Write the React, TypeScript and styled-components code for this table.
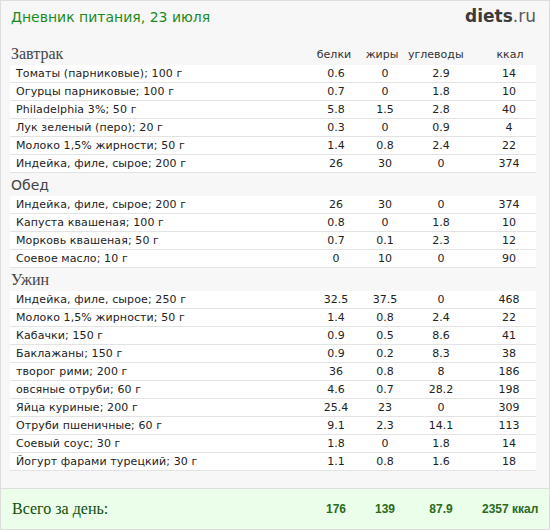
import React from "react";
import styled, { createGlobalStyle } from "styled-components";

const Global = createGlobalStyle`
  html, body { margin: 0; padding: 0; background: #ffffff; }
  * { box-sizing: border-box; }
`;

const COLS = "1fr 52px 46px 66px 62px";

const Page = styled.div`
  width: 550px;
  height: 530px;
  border: 1px solid #dddddd;
  background: #f7f7f7;
  display: flex;
  flex-direction: column;
  font-family: "DejaVu Sans", Verdana, sans-serif;
`;

const Content = styled.div`
  padding: 0 13px 0 9px;
  display: flex;
  flex-direction: column;
`;

const Header = styled.header`
  height: 41px;
  padding-top: 6px;
  display: flex;
  justify-content: space-between;
  align-items: flex-start;
`;

const Title = styled.h1`
  margin: 0;
  padding-left: 1px;
  font-family: "DejaVu Sans", Tahoma, sans-serif;
  font-weight: normal;
  font-size: 14px;
  line-height: 20px;
  color: #1c8a1c;
`;

const Logo = styled.div`
  font-family: "DejaVu Sans", Tahoma, sans-serif;
  font-size: 17px;
  line-height: 18px;
  color: #3b3b3b;
  b { font-weight: bold; color: #3b3b3b; }
  span { font-weight: normal; color: #5a5a5a; }
`;

const SectionHead = styled.div`
  height: 23px;
  display: grid;
  grid-template-columns: ${COLS};
  align-items: end;
  padding-bottom: 2px;
`;

const SectionTitle = styled.div<{ $serif?: boolean }>`
  font-family: ${(p) =>
    p.$serif ? `"Liberation Serif", "Times New Roman", serif` : `"DejaVu Sans", Tahoma, sans-serif`};
  font-size: ${(p) => (p.$serif ? "16px" : "14px")};
  line-height: 18px;
  color: #454545;
  padding-left: 1px;
`;

const ColHead = styled.div<{ $right?: number; $left?: number }>`
  text-align: center;
  font-size: 11px;
  line-height: 16px;
  color: #333333;
  padding-right: ${(p) => p.$right ?? 0}px;
  padding-left: ${(p) => p.$left ?? 0}px;
`;

const Row = styled.div`
  height: 18px;
  display: grid;
  grid-template-columns: ${COLS};
  align-items: center;
  background: #ffffff;
  border-bottom: 1px solid #e3e3e3;
  font-size: 11px;
  color: #222222;
`;

const Name = styled.div`
  padding-left: 6px;
  white-space: nowrap;
  letter-spacing: 0.1px;
`;

const Num = styled.div<{ $kcal?: boolean }>`
  text-align: center;
  padding-left: ${(p) => (p.$kcal ? "8px" : "0")};
`;

const Footer = styled.footer`
  margin-top: auto;
  height: 41px;
  border-top: 1px solid #dedede;
  background: #eafeea;
  padding: 0 13px 0 9px;
  display: grid;
  grid-template-columns: ${COLS};
  align-items: center;
`;

const TotalLabel = styled.div`
  font-family: "Liberation Serif", "Times New Roman", serif;
  font-size: 16px;
  color: #0d4f0d;
  padding-left: 2px;
  padding-bottom: 1px;
`;

const TotalNum = styled.div<{ $kcal?: boolean }>`
  text-align: center;
  font-family: "Liberation Sans", Arial, sans-serif;
  font-weight: bold;
  font-size: 12px;
  color: #2b6a20;
  white-space: nowrap;
  padding-left: ${(p) => (p.$kcal ? "8px" : "0")};
`;

type Item = [string, string, string, string, string];

const sections: { title: string; serif: boolean; items: Item[] }[] = [
  {
    title: "Завтрак",
    serif: true,
    items: [
      ["Томаты (парниковые); 100 г", "0.6", "0", "2.9", "14"],
      ["Огурцы парниковые; 100 г", "0.7", "0", "1.8", "10"],
      ["Philadelphia 3%; 50 г", "5.8", "1.5", "2.8", "40"],
      ["Лук зеленый (перо); 20 г", "0.3", "0", "0.9", "4"],
      ["Молоко 1,5% жирности; 50 г", "1.4", "0.8", "2.4", "22"],
      ["Индейка, филе, сырое; 200 г", "26", "30", "0", "374"],
    ],
  },
  {
    title: "Обед",
    serif: false,
    items: [
      ["Индейка, филе, сырое; 200 г", "26", "30", "0", "374"],
      ["Капуста квашеная; 100 г", "0.8", "0", "1.8", "10"],
      ["Морковь квашеная; 50 г", "0.7", "0.1", "2.3", "12"],
      ["Соевое масло; 10 г", "0", "10", "0", "90"],
    ],
  },
  {
    title: "Ужин",
    serif: true,
    items: [
      ["Индейка, филе, сырое; 250 г", "32.5", "37.5", "0", "468"],
      ["Молоко 1,5% жирности; 50 г", "1.4", "0.8", "2.4", "22"],
      ["Кабачки; 150 г", "0.9", "0.5", "8.6", "41"],
      ["Баклажаны; 150 г", "0.9", "0.2", "8.3", "38"],
      ["творог рими; 200 г", "36", "0.8", "8", "186"],
      ["овсяные отруби; 60 г", "4.6", "0.7", "28.2", "198"],
      ["Яйца куриные; 200 г", "25.4", "23", "0", "309"],
      ["Отруби пшеничные; 60 г", "9.1", "2.3", "14.1", "113"],
      ["Соевый соус; 30 г", "1.8", "0", "1.8", "14"],
      ["Йогурт фарами турецкий; 30 г", "1.1", "0.8", "1.6", "18"],
    ],
  },
];

export default function App() {
  return (
    <>
      <Global />
      <Page>
        <Content>
          <Header>
            <Title>Дневник питания, 23 июля</Title>
            <Logo>
              <b>diets</b>
              <span>.ru</span>
            </Logo>
          </Header>
          {sections.map((s, si) => (
            <React.Fragment key={s.title}>
              <SectionHead>
                <SectionTitle $serif={s.serif}>{s.title}</SectionTitle>
                {si === 0 && (
                  <>
                    <ColHead $right={4}>белки</ColHead>
                    <ColHead $right={6}>жиры</ColHead>
                    <ColHead $right={12}>углеводы</ColHead>
                    <ColHead $left={10}>ккал</ColHead>
                  </>
                )}
              </SectionHead>
              {s.items.map((it, i) => (
                <Row key={i}>
                  <Name>{it[0]}</Name>
                  <Num>{it[1]}</Num>
                  <Num>{it[2]}</Num>
                  <Num>{it[3]}</Num>
                  <Num $kcal>{it[4]}</Num>
                </Row>
              ))}
            </React.Fragment>
          ))}
        </Content>
        <Footer>
          <TotalLabel>Всего за день:</TotalLabel>
          <TotalNum>176</TotalNum>
          <TotalNum>139</TotalNum>
          <TotalNum>87.9</TotalNum>
          <TotalNum $kcal>2357 ккал</TotalNum>
        </Footer>
      </Page>
    </>
  );
}
